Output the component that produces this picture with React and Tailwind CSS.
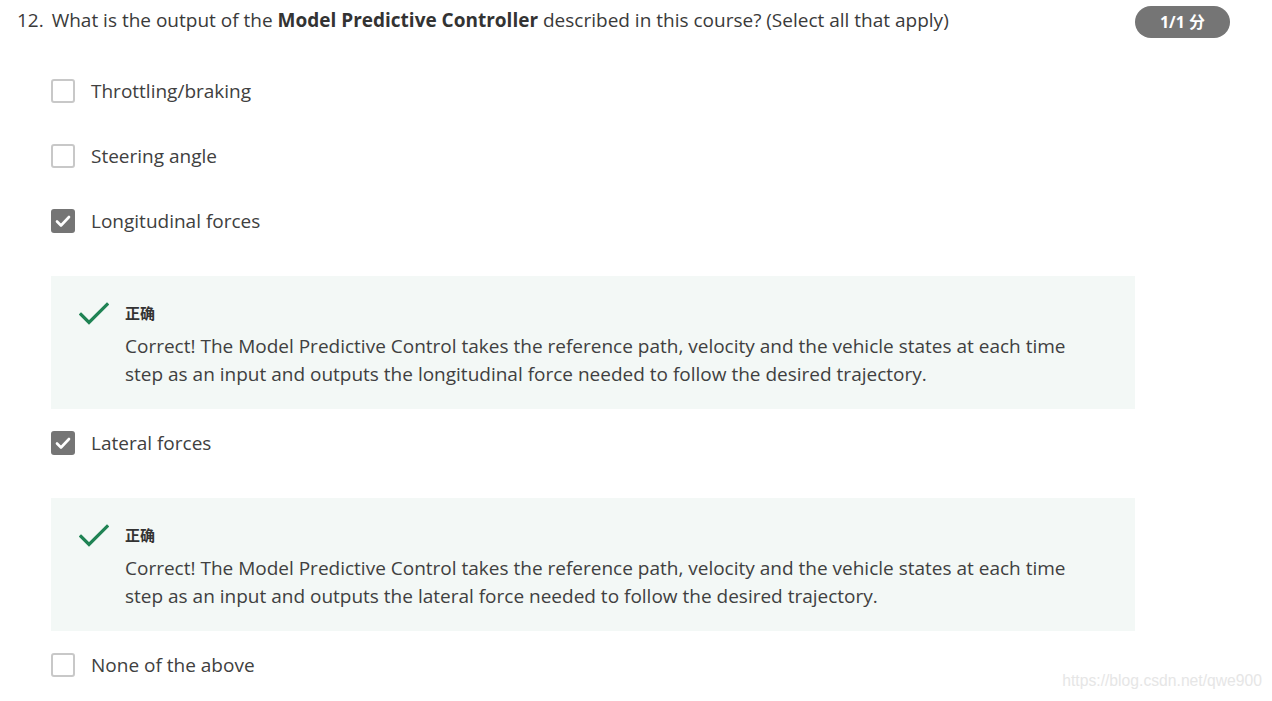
import React from 'react';

const options = [
  { id: 1, label: 'Throttling/braking', checked: false },
  { id: 2, label: 'Steering angle', checked: false },
  {
    id: 3,
    label: 'Longitudinal forces',
    checked: true,
    feedback:
      'Correct! The Model Predictive Control takes the reference path, velocity and the vehicle states at each time step as an input and outputs the longitudinal force needed to follow the desired trajectory.',
  },
  {
    id: 4,
    label: 'Lateral forces',
    checked: true,
    feedback:
      'Correct! The Model Predictive Control takes the reference path, velocity and the vehicle states at each time step as an input and outputs the lateral force needed to follow the desired trajectory.',
  },
  { id: 5, label: 'None of the above', checked: false },
];

const Checkbox = ({ checked }) =>
  checked ? (
    <div className="w-6 h-6 rounded-[3px] bg-[#757575] flex items-center justify-center">
      <svg width="18" height="18" viewBox="0 0 18 18" fill="none">
        <path d="M3 9.5l4 4 8-8.5" stroke="#fff" strokeWidth="2.6" strokeLinecap="round" strokeLinejoin="round" />
      </svg>
    </div>
  ) : (
    <div className="w-6 h-6 rounded-[3px] border-2 border-[#c8c8c8] bg-white" />
  );

const App = () => {
  return (
    <div className="relative w-[1272px] h-[701px] bg-white overflow-hidden text-[#404040] font-['Open_Sans','Noto_Sans_CJK_SC',sans-serif]">
      <div className="flex items-start justify-between pl-[17px] pr-[42px] pt-[6px]">
        <p className="text-[19px] leading-[28px] text-[#3a3a3a]">
          <span className="mr-[3px]">12.</span> What is the output of the <span className="font-bold text-[#333]">Model Predictive Controller</span> described in this course? (Select all that apply)
        </p>
        <div className="w-[95px] h-8 rounded-full bg-[#757575] flex items-center justify-center text-white text-[16px] font-bold">
          1/1 分
        </div>
      </div>

      <div className="pl-[51px] pt-[41px] w-[1135px]">
        {options.map((opt) => (
          <div key={opt.id} className={opt.feedback ? 'pb-[22px]' : 'pb-[41px]'}>
            <div className="flex items-center gap-[16px] h-6">
              <Checkbox checked={opt.checked} />
              <span className="text-[19px] text-[#404040]">{opt.label}</span>
            </div>
            {opt.feedback && (
              <div className="mt-[43px] bg-[#f3f8f6] pl-[28px] pr-[50px] pt-[26px] pb-[21px] flex gap-[16px]">
                <svg width="30" height="24" viewBox="0 0 30 24" fill="none" className="shrink-0">
                  <path d="M2 12.5l8 8L28 2.5" stroke="#1f8354" strokeWidth="3.2" strokeLinecap="square" />
                </svg>
                <div>
                  <div className="text-[15px] font-bold leading-[22px] text-[#333] font-['Noto_Sans_CJK_SC',sans-serif]">正确</div>
                  <p className="mt-[8px] text-[19px] leading-[28px] text-[#404040]">{opt.feedback}</p>
                </div>
              </div>
            )}
          </div>
        ))}
      </div>

      <div className="absolute right-[10px] bottom-[8px] text-[15.7px] text-[#e6e6e6] font-['Liberation_Sans',sans-serif]">
        https://blog.csdn.net/qwe900
      </div>
    </div>
  );
};

export default App;
